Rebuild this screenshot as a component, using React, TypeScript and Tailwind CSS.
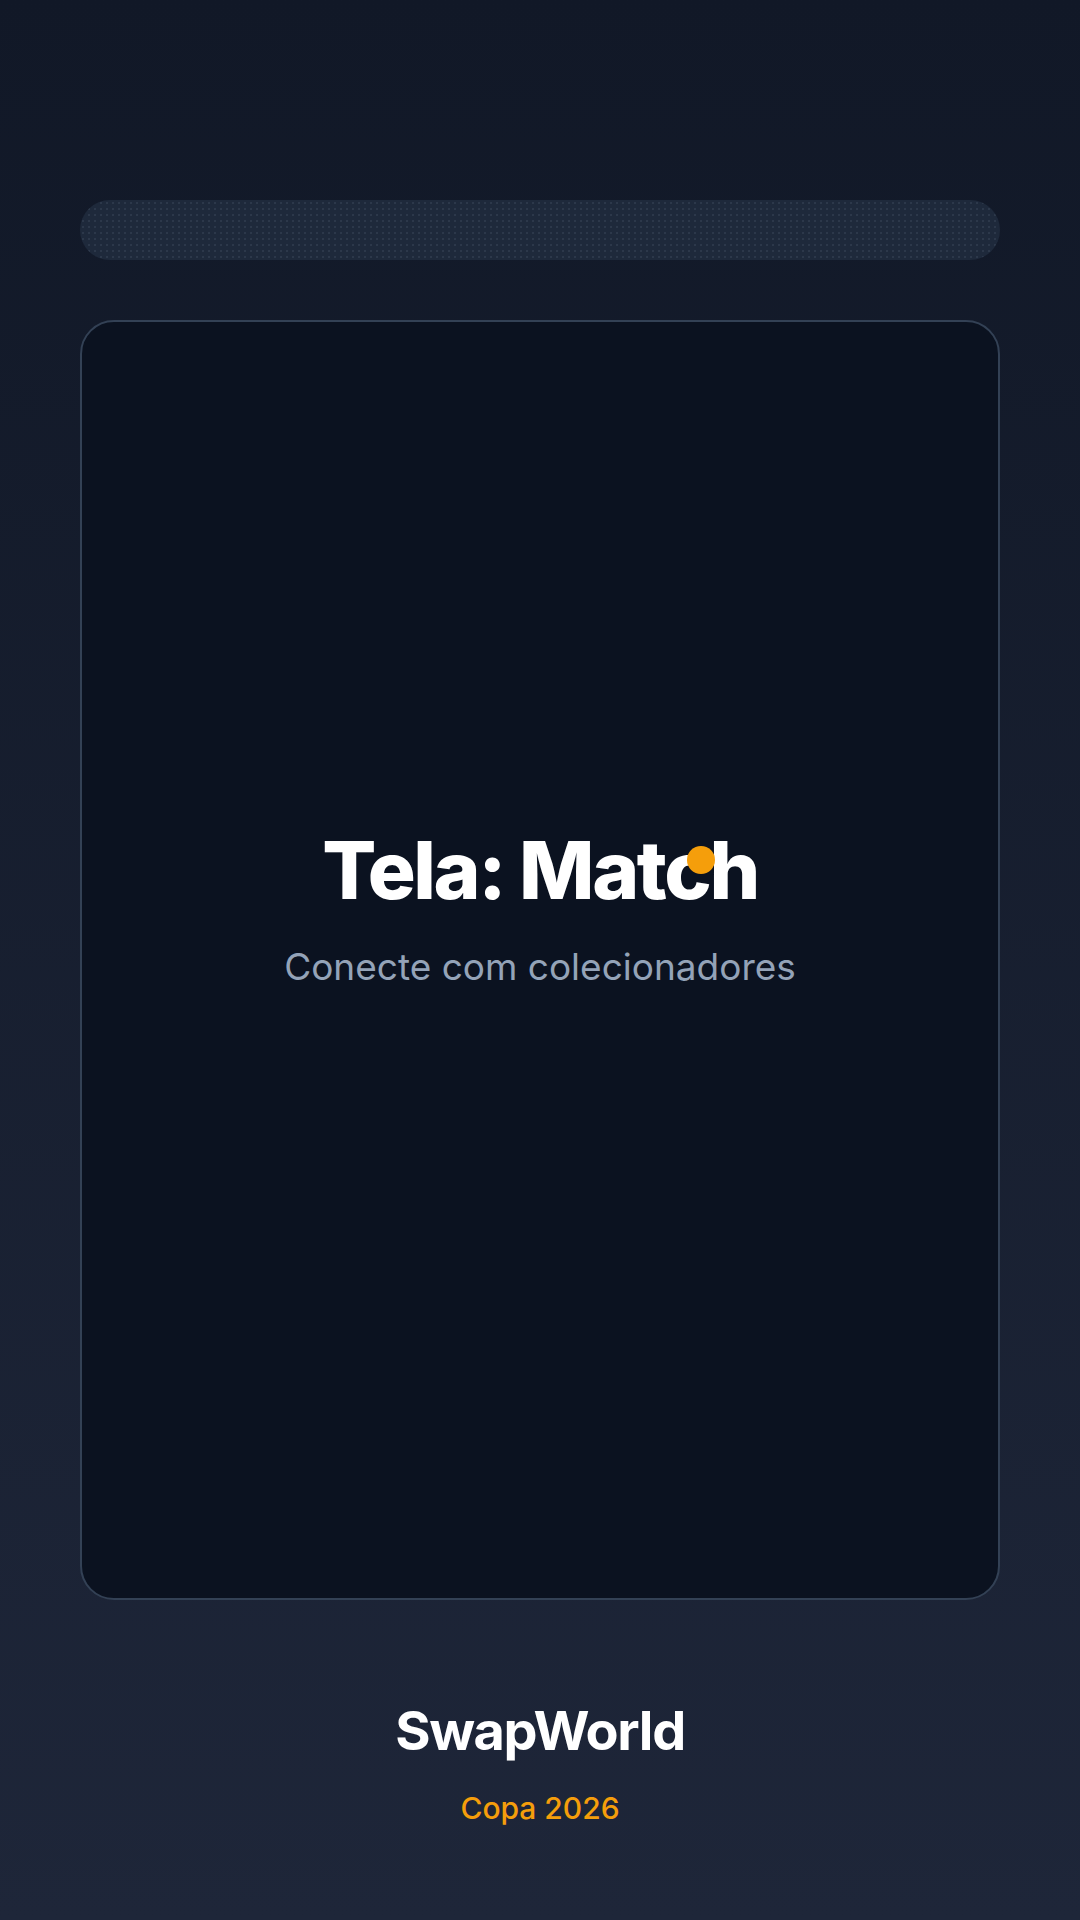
import React from "react";

const dots =
  "bg-[radial-gradient(rgba(148,163,184,0.12)_1px,transparent_1px)] bg-[length:6px_6px]";

function MatchTitle() {
  return (
    <h1 className="text-[80px] leading-none font-extrabold tracking-[-0.03em] text-white">
      Tela: Mat
      <span className="relative">
        c
        <span className="absolute top-[25px] right-[-6px] w-[28px] h-[28px] rounded-full bg-[#f59e0b]" />
      </span>
      h
    </h1>
  );
}

export default function App() {
  return (
    <div
      className="min-h-screen h-[1920px] bg-gradient-to-b from-[#111827] to-[#1e2639] flex flex-col px-20 pt-[200px]"
      style={{ fontFamily: "Inter, 'Noto Sans', sans-serif" }}
    >
      <div className={`h-[60px] rounded-full bg-[#1e293b] ${dots}`} />

      <div className="mt-[60px] h-[1280px] rounded-[34px] border-2 border-[#334155] bg-[#0b1220] flex flex-col items-center justify-center pb-[96px]">
        <MatchTitle />
        <p className="mt-[29px] text-[37px] text-[#94a3b8]">Conecte com colecionadores</p>
      </div>

      <div className="flex flex-col items-center pt-[104px]">
        <h2 className="text-[54px] font-bold leading-none tracking-tight text-white">SwapWorld</h2>
        <p className="mt-[35px] text-[30px] font-medium leading-none text-[#f59e0b]">Copa 2026</p>
      </div>
    </div>
  );
}
